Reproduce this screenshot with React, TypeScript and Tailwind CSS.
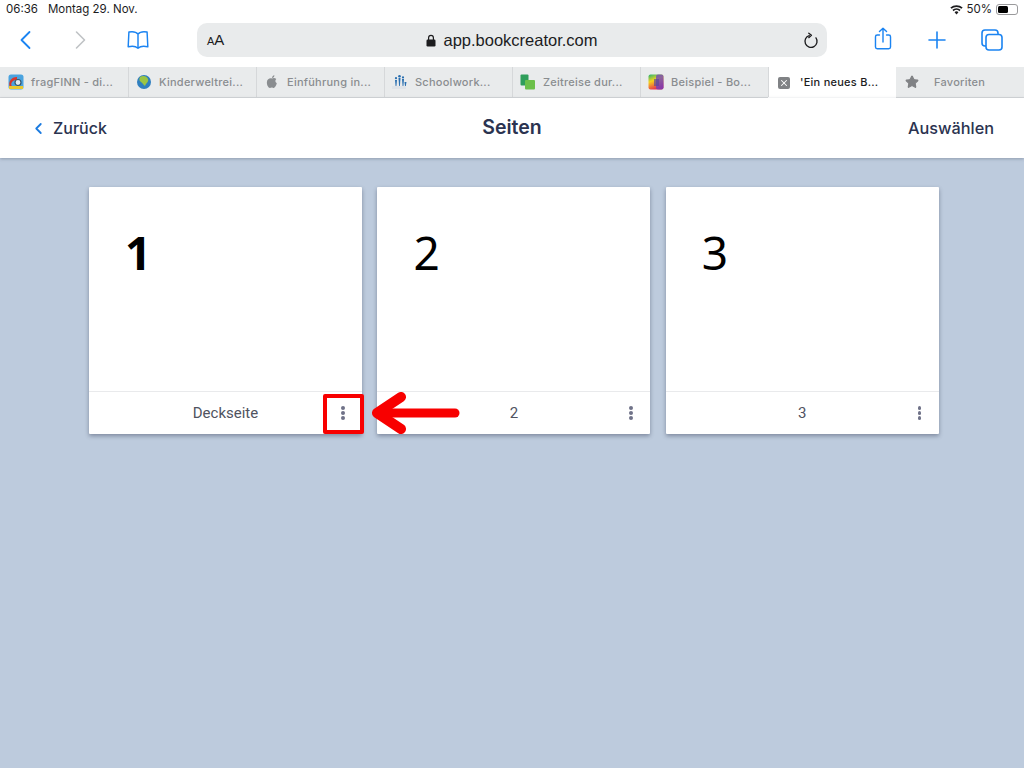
import React from 'react';
import { Star, X } from 'lucide-react';

const tabIconClass = 'w-[16px] h-[16px] shrink-0';

const FragFinnIcon = () => (
  <svg viewBox="0 0 16 16" className={tabIconClass}>
    <rect x="0.5" y="0.5" width="15" height="15" rx="2.5" fill="#4aa3df" />
    <path d="M2 13 A7 7 0 0 1 9 3 L9 7 A3 3 0 0 0 5 13 Z" fill="#d9352a" />
    <rect x="1" y="12" width="14" height="3" fill="#e9c92e" />
    <circle cx="10" cy="8.5" r="3" fill="#dfeaf2" stroke="#35566b" strokeWidth="1.2" />
  </svg>
);

const GlobeIcon = () => (
  <svg viewBox="0 0 16 16" className={tabIconClass}>
    <circle cx="8" cy="8" r="7" fill="#2f7fbf" />
    <path d="M4 3 C7 1 11 2 12 5 C13 8 10 9 9 12 C7 11 7 9 5 8 C3 7 3 5 4 3 Z" fill="#9bc544" />
  </svg>
);

const AppleIcon = () => (
  <svg viewBox="0 0 16 16" className={tabIconClass}>
    <path
      d="M8 4.6 C9.3 3.6 11 3.7 12.3 5 C11 6 11 8.3 12.8 9.2 C12.2 11.4 10.8 14 9.6 14 C8.8 14 8.6 13.5 7.8 13.5 C7 13.5 6.6 14 5.9 14 C4.4 14 2.6 10.8 2.9 8 C3.2 5 6 3.8 8 4.6 Z M8 4 C8 2.6 9 1.4 10.4 1.2 C10.5 2.7 9.4 3.9 8 4 Z"
      fill="#8a8d90"
    />
  </svg>
);

const SchoolworkIcon = () => (
  <svg viewBox="0 0 16 16" className={tabIconClass}>
    <rect x="0" y="12" width="14" height="3" fill="#dfe3e8" />
    <g fill="#2a6fb0">
      <path d="M3 6 L5 6 L4.4 12 L3.6 12 Z" />
      <path d="M6.5 4 L8.5 4 L7.9 12 L7.1 12 Z" />
      <path d="M10 5 L12 5 L11.4 12 L10.6 12 Z" />
      <path d="M12.5 8 L14.5 8 L13.8 12 L13 12 Z" />
      <circle cx="7.5" cy="2.2" r="1.3" />
      <circle cx="11" cy="3.4" r="1.1" />
      <circle cx="4" cy="4.2" r="1.1" />
    </g>
  </svg>
);

const ZeitreiseIcon = () => (
  <svg viewBox="0 0 16 16" className={tabIconClass}>
    <rect x="0.5" y="0.5" width="8" height="11" rx="1" fill="#2f9e5b" />
    <rect x="5" y="6" width="10" height="9.5" rx="1" fill="#6cc04a" />
  </svg>
);

const BeispielIcon = () => (
  <svg viewBox="0 0 16 16" className={tabIconClass}>
    <defs>
      <linearGradient id="rainbow" x1="0" y1="0" x2="0.4" y2="1">
        <stop offset="0" stopColor="#22b573" />
        <stop offset="0.45" stopColor="#f7d21e" />
        <stop offset="1" stopColor="#e8304f" />
      </linearGradient>
    </defs>
    <rect x="0.5" y="0.5" width="15" height="15" rx="2" fill="url(#rainbow)" />
    <rect x="8" y="0.5" width="7.5" height="15" rx="2" fill="#6a3fc4" opacity="0.75" />
    <rect x="6" y="5" width="5" height="7" fill="#5a4a9a" opacity="0.7" />
  </svg>
);

const tabs = [
  { title: 'fragFINN - di...', icon: <FragFinnIcon /> },
  { title: 'Kinderweltrei...', icon: <GlobeIcon /> },
  { title: 'Einführung in...', icon: <AppleIcon /> },
  { title: 'Schoolwork...', icon: <SchoolworkIcon /> },
  { title: 'Zeitreise dur...', icon: <ZeitreiseIcon /> },
  { title: 'Beispiel - Bo...', icon: <BeispielIcon /> },
];

const StatusBar = () => (
  <div className="h-[19px] pl-[6px] pr-[6px] flex items-center justify-between text-[11.5px] text-[#1c1c1e] font-['Inter',sans-serif]">
    <div className="flex gap-[10px]">
      <span>06:36</span>
      <span>Montag 29. Nov.</span>
    </div>
    <div className="flex items-center gap-[3px]">
      <svg viewBox="0 0 16 12" className="w-[13px] h-[10px]" fill="#1c1c1e">
        <path d="M8 11.5 L5.6 8.7 A3.6 3.6 0 0 1 10.4 8.7 Z" />
        <path d="M4.4 7.4 L3 5.8 A7.4 7.4 0 0 1 13 5.8 L11.6 7.4 A5.4 5.4 0 0 0 4.4 7.4 Z" />
        <path d="M1.9 4.6 L0.4 3 A11.2 11.2 0 0 1 15.6 3 L14.1 4.6 A9.2 9.2 0 0 0 1.9 4.6 Z" />
      </svg>
      <span>50%</span>
      <div className="ml-[1px] w-[22px] h-[11px] rounded-[3px] border border-[#9a9a9c] p-[1px] flex">
        <div className="w-[10px] bg-black rounded-[1.5px]" />
      </div>
    </div>
  </div>
);

const Toolbar = () => (
  <div className="h-[48px] relative flex items-start">
    <div className="w-[197px] h-[38px] pt-[4px] pl-[18px] flex items-center shrink-0">
      <svg viewBox="0 0 14 20" className="w-[14px] h-[20px]" fill="none" stroke="#1b84f2" strokeWidth="1.8" strokeLinecap="round" strokeLinejoin="round">
        <path d="M11.5 2 L3.5 10 L11.5 18" />
      </svg>
      <svg viewBox="0 0 14 20" className="w-[14px] h-[20px] ml-[42px]" fill="none" stroke="#bfc2c5" strokeWidth="1.6" strokeLinecap="round" strokeLinejoin="round">
        <path d="M2.5 2 L10.5 10 L2.5 18" />
      </svg>
      <svg viewBox="0 0 24 22" className="w-[24px] h-[20px] ml-[38px]" fill="none" stroke="#1b84f2" strokeWidth="1.6" strokeLinejoin="round">
        <path d="M12 4.5 C10 2 6 1.5 2 2.2 L1.2 18.5 C5 17.5 9.5 17.8 12 20 C14.5 17.8 19 17.5 22.8 18.5 L22 2.2 C18 1.5 14 2 12 4.5 Z M12 4.5 L12 20" />
      </svg>
    </div>
    <div className="mt-[4px] w-[630px] h-[34px] rounded-[10px] bg-[#e9ebec] flex items-center relative shrink-0 font-['Liberation_Sans',sans-serif] text-[#1c1c1e]">
      <span className="ml-[10px] flex items-baseline">
        <span className="text-[11px]">A</span>
        <span className="text-[15px]">A</span>
      </span>
      <div className="absolute left-0 right-0 flex items-center justify-center gap-[7px] text-[16.5px]">
        <svg viewBox="0 0 10 13" className="w-[10px] h-[13px]" fill="#1c1c1e">
          <path d="M2 6 V3.8 A3 3 0 0 1 8 3.8 V6 H6.8 V3.8 A1.8 1.8 0 0 0 3.2 3.8 V6 Z" />
          <rect x="0.5" y="5.5" width="9" height="7" rx="1.2" />
        </svg>
        <span>app.bookcreator.com</span>
      </div>
      <svg viewBox="0 0 18 18" className="absolute right-[8px] w-[16px] h-[17px]" fill="none" stroke="#1c1c1e" strokeWidth="1.5" strokeLinecap="round">
        <path d="M7 3.4 A6.8 6.8 0 1 0 14.6 6" />
        <path d="M6.5 0.8 L9.5 3.2 L6.5 5.8" strokeLinejoin="round" />
      </svg>
    </div>
    <div className="h-[38px] relative flex-1">
      <svg viewBox="0 0 20 26" className="absolute left-[47px] top-[8px] w-[18px] h-[23px]" fill="none" stroke="#1b84f2" strokeWidth="1.6" strokeLinecap="round" strokeLinejoin="round">
        <path d="M6 9 H3.5 A2 2 0 0 0 1.5 11 V22.5 A2 2 0 0 0 3.5 24.5 H16.5 A2 2 0 0 0 18.5 22.5 V11 A2 2 0 0 0 16.5 9 H14" />
        <path d="M10 17 V1.5 M6 5.2 L10 1.5 L14 5.2" />
      </svg>
      <svg viewBox="0 0 18 18" className="absolute left-[101px] top-[12px] w-[18px] h-[18px]" fill="none" stroke="#1b84f2" strokeWidth="1.6" strokeLinecap="round">
        <path d="M9 1 V17 M1 9 H17" />
      </svg>
      <svg viewBox="0 0 22 22" className="absolute left-[154px] top-[10px] w-[22px] h-[22px]" fill="none" stroke="#1b84f2" strokeWidth="1.6" strokeLinejoin="round">
        <rect x="5" y="5.5" width="16" height="15.5" rx="3" />
        <path d="M5 17 H4 A3 3 0 0 1 1 14 V4 A3 3 0 0 1 4 1 H14 A3 3 0 0 1 17 4 V5.5" />
      </svg>
    </div>
  </div>
);

const TabBar = () => (
  <div className="h-[31px] flex bg-[#e9ebec] border-b border-[#d6d8da] font-['Inter',sans-serif] font-medium text-[11px] tracking-[0.25px]">
    {tabs.map((tab) => (
      <div key={tab.title} className="w-[128px] flex items-center pl-[7px] gap-[7px] border-r border-[#d6d8da] text-[#8a8d90] shrink-0 translate-x-px">
        {tab.icon}
        <span className="whitespace-nowrap">{tab.title}</span>
      </div>
    ))}
    <div className="w-[128px] -mb-px bg-white flex items-center pl-[10px] gap-[10px] text-[#1c1c1e] shrink-0">
      <span className="w-[12px] h-[12px] rounded-[2px] bg-[#808285] flex items-center justify-center">
        <X className="w-[10px] h-[10px] text-white" strokeWidth={2.5} />
      </span>
      <span className="whitespace-nowrap">'Ein neues B...</span>
    </div>
    <div className="flex items-center pl-[9px] gap-[15px] text-[#8a8d90]">
      <Star className="w-[14px] h-[14px]" fill="#808285" stroke="#808285" />
      <span>Favoriten</span>
    </div>
  </div>
);

const AppHeader = () => (
  <div className="relative z-10 h-[60px] bg-white flex items-center justify-between pl-[34px] pr-[30px] shadow-[0_1px_3px_rgba(60,70,90,0.35)] font-['Inter',sans-serif] text-[#2b3350]">
    <div className="flex items-center gap-[10px] text-[16px] font-medium">
      <svg viewBox="0 0 10 14" className="w-[9px] h-[13px]" fill="none" stroke="#1b7be0" strokeWidth="2" strokeLinecap="round" strokeLinejoin="round">
        <path d="M7.5 2 L2.5 7 L7.5 12" />
      </svg>
      <span>Zurück</span>
    </div>
    <div className="absolute left-0 right-0 text-center text-[19.5px] font-semibold">Seiten</div>
    <span className="text-[16.3px] font-medium">Auswählen</span>
  </div>
);

const pages = [
  { number: '1', label: 'Deckseite', bold: true },
  { number: '2', label: '2', bold: false },
  { number: '3', label: '3', bold: false },
];

const PageCard = ({ number, label, bold }: { number: string; label: string; bold: boolean }) => (
  <div className="h-[247px] bg-white flex flex-col shadow-[0_2px_4px_rgba(50,60,85,0.45)] rounded-[1px]">
    <div className="flex-1 border-b border-[#e9eaec] pt-[35px] pl-[36px]">
      <span className={`block text-[46px] leading-[60px] text-black font-['Noto_Sans',sans-serif] ${bold ? 'font-bold' : 'font-normal'}`}>
        {number}
      </span>
    </div>
    <div className="h-[42px] relative flex items-center justify-center font-['Roboto',sans-serif] text-[15px] text-[#50535f]">
      <span>{label}</span>
      <div className="absolute right-[17.5px] top-0 bottom-0 flex flex-col justify-center gap-[1.5px]">
        <span className="w-[3.5px] h-[3.5px] rounded-full bg-[#6f7288]" />
        <span className="w-[3.5px] h-[3.5px] rounded-full bg-[#6f7288]" />
        <span className="w-[3.5px] h-[3.5px] rounded-full bg-[#6f7288]" />
      </div>
    </div>
  </div>
);

const App = () => {
  return (
    <div className="w-[1024px] h-[768px] overflow-hidden bg-[#bdcbdd] relative">
      <div className="bg-white">
        <StatusBar />
        <Toolbar />
      </div>
      <TabBar />
      <AppHeader />
      <div className="ml-[89px] mt-[29px] grid grid-cols-[273px_273px_273px] gap-[15.4px]">
        {pages.map((p) => (
          <PageCard key={p.number} {...p} />
        ))}
      </div>
      {/* annotation over the first card's menu */}
      <div className="absolute left-[323px] top-[394px] w-[41px] h-[40px] border-[4px] border-[#f80000] rounded-[2px]" />
      <svg viewBox="0 0 92 44" className="absolute left-[370px] top-[392px] w-[92px] h-[44px]" fill="none" stroke="#f80000" strokeLinecap="round" strokeLinejoin="round">
        <path d="M8 21 H85" strokeWidth="9" />
        <path d="M31 5 L7 21 L31 37" strokeWidth="10" />
      </svg>
    </div>
  );
};

export default App;
